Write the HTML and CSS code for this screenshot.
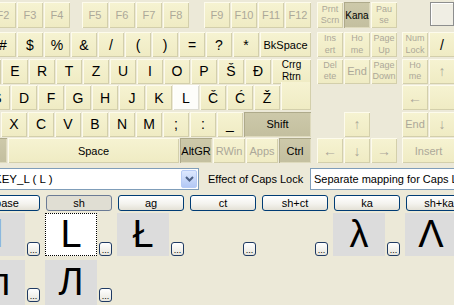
FILE: index.html
```html
<!DOCTYPE html>
<html lang="en">
<head>
    <meta charset="UTF-8">
    <title>Keyboard layout editor</title>
    <link rel="stylesheet" href="styles.css">
</head>
<body>
    <div class="keyboard">
        <div class="main">
            <div class="row frow off-f">
                <div class="key dim fn">F2</div>
                <div class="key dim fn">F3</div>
                <div class="key dim fn">F4</div>
                <div class="key dim fn gap11">F5</div>
                <div class="key dim fn">F6</div>
                <div class="key dim fn">F7</div>
                <div class="key dim fn">F8</div>
                <div class="key dim fn gap14">F9</div>
                <div class="key dim fn">F10</div>
                <div class="key dim fn">F11</div>
                <div class="key dim fn">F12</div>
            </div>
            <div class="rows">
                <div class="row off-2">
                    <div class="key">#</div>
                    <div class="key">$</div>
                    <div class="key">%</div>
                    <div class="key">&amp;</div>
                    <div class="key">/</div>
                    <div class="key">(</div>
                    <div class="key">)</div>
                    <div class="key">=</div>
                    <div class="key">?</div>
                    <div class="key">*</div>
                    <div class="key lbl w51">BkSpace</div>
                </div>
                <div class="row off-3">
                    <div class="key">W</div>
                    <div class="key">E</div>
                    <div class="key">R</div>
                    <div class="key">T</div>
                    <div class="key">Z</div>
                    <div class="key">U</div>
                    <div class="key">I</div>
                    <div class="key">O</div>
                    <div class="key">P</div>
                    <div class="key">Š</div>
                    <div class="key">Đ</div>
                    <div class="key enter-top w39">Crrg<br>Rtrn</div>
                </div>
                <div class="row off-4">
                    <div class="key">S</div>
                    <div class="key">D</div>
                    <div class="key">F</div>
                    <div class="key">G</div>
                    <div class="key">H</div>
                    <div class="key">J</div>
                    <div class="key">K</div>
                    <div class="key sel">L</div>
                    <div class="key">Č</div>
                    <div class="key">Ć</div>
                    <div class="key">Ž</div>
                    <div class="key enter-low w30"></div>
                </div>
                <div class="row off-5">
                    <div class="key">Y</div>
                    <div class="key">X</div>
                    <div class="key">C</div>
                    <div class="key">V</div>
                    <div class="key">B</div>
                    <div class="key">N</div>
                    <div class="key">M</div>
                    <div class="key">;</div>
                    <div class="key">:</div>
                    <div class="key">_</div>
                    <div class="key lbl down w67">Shift</div>
                </div>
                <div class="row off-6">
                    <div class="key down w27"></div>
                    <div class="key lbl w171">Space</div>
                    <div class="key lbl down w32">AltGR</div>
                    <div class="key lbl dim w32">RWin</div>
                    <div class="key lbl dim w32">Apps</div>
                    <div class="key lbl down w32">Ctrl</div>
                </div>
            </div>
        </div>

        <div class="nav">
            <div class="grid3 frow">
                <div class="key dim sm">Prnt<br>Scrn</div>
                <div class="key down kana">Kana</div>
                <div class="key dim sm">Pau<br>se</div>
            </div>
            <div class="grid3 pad">
                <div class="key dim sm">Ins<br>ert</div>
                <div class="key dim sm">Ho<br>me</div>
                <div class="key dim sm">Page<br>Up</div>
                <div class="key dim sm">Del<br>ete</div>
                <div class="key dim lbl">End</div>
                <div class="key dim sm">Page<br>Down</div>
                <div class="key dim arrow up">↑</div>
                <div class="key dim arrow left">←</div>
                <div class="key dim arrow down-arrow">↓</div>
                <div class="key dim arrow right">→</div>
            </div>
        </div>

        <div class="num">
            <div class="grid2 frow">
                <div class="led"></div>
            </div>
            <div class="grid2 pad">
                <div class="key dim sm">Num<br>Lock</div>
                <div class="key">/</div>
                <div class="key dim sm">Ho<br>me</div>
                <div class="key dim arrow">↑</div>
                <div class="key dim arrow">←</div>
                <div class="key"></div>
                <div class="key dim lbl">End</div>
                <div class="key dim arrow">↓</div>
                <div class="key dim lbl span2">Insert</div>
            </div>
        </div>
    </div>

    <div class="controls">
        <div class="combo">
            <span class="combo-text">KEY_L ( L )</span>
            <span class="combo-btn">
                <svg width="9" height="6" viewBox="0 0 9 6"><path d="M1 1 L4.5 4.5 L8 1" fill="none" stroke="#4d6185" stroke-width="2"/></svg>
            </span>
        </div>
        <span class="caps-label">Effect of Caps Lock</span>
        <div class="field">Separate mapping for Caps Lock</div>
    </div>

    <div class="tabs">
        <div class="tab">base</div>
        <div class="tab on">sh</div>
        <div class="tab">ag</div>
        <div class="tab">ct</div>
        <div class="tab">sh+ct</div>
        <div class="tab">ka</div>
        <div class="tab">sh+ka</div>
    </div>

    <div class="cells">
        <div class="slot"><div class="cell grey blue">l</div><div class="dots">...</div></div>
        <div class="slot"><div class="cell focus">L</div><div class="dots">...</div></div>
        <div class="slot"><div class="cell grey">Ł</div><div class="dots">...</div></div>
        <div class="slot"><div class="cell"></div><div class="dots">...</div></div>
        <div class="slot"><div class="cell"></div><div class="dots">...</div></div>
        <div class="slot"><div class="cell grey">λ</div><div class="dots">...</div></div>
        <div class="slot"><div class="cell grey">Λ</div><div class="dots">...</div></div>
    </div>
    <div class="cells second">
        <div class="slot"><div class="cell grey">л</div><div class="dots">...</div></div>
        <div class="slot"><div class="cell grey">Л</div><div class="dots">...</div></div>
    </div>
</body>
</html>
```

FILE: styles.css
```css
body {
    margin: 0;
    width: 454px;
    height: 305px;
    overflow: hidden;
    background: #ece9d8;
    font-family: "Liberation Sans", Arial, sans-serif;
    color: #000;
}
.keyboard {
    display: flex;
    align-items: flex-start;
    height: 163px;
}
.main {
    flex: none;
    width: 312px;
}
.nav {
    flex: none;
    width: 80px;
    margin-left: 5px;
}
.num {
    flex: none;
    width: 53px;
    margin-left: 5px;
}
.row {
    display: flex;
    gap: 1px;
    height: 25px;
}
.frow {
    height: 26px;
    margin-top: 2px;
}
.rows {
    display: flex;
    flex-direction: column;
    gap: 1.5px;
    margin-top: 4px;
}
.off-f, .off-2 { margin-left: -10px; }
.off-3 { margin-left: -25px; }
.off-4 { margin-left: -16px; }
.off-5 { margin-left: -26px; }
.off-6 { margin-left: -20px; }
.gap11 { margin-left: 11px; }
.gap14 { margin-left: 14px; }
.key {
    flex: none;
    width: 26px;
    box-sizing: border-box;
    display: flex;
    align-items: center;
    justify-content: center;
    text-align: center;
    white-space: nowrap;
    font-size: 14px;
    background: linear-gradient(#f6f3d2, #efebc3);
    box-shadow: inset 1px 1px 0 #fdfbec, inset -1px -1px 0 #d3cfab;
}
.w27 { width: 27px; }
.w30 { width: 30px; }
.w32 { width: 32px; }
.w39 { width: 39px; }
.w51 { width: 51px; }
.w67 { width: 67px; }
.w171 { width: 171px; }
.fn { font-size: 11px; }
.lbl { font-size: 11px; }
.sm {
    font-size: 9px;
    line-height: 11.5px;
}
.kana { font-size: 10px; }
.arrow { font-size: 14px; }
.dim { color: #aca899; }
.down {
    background: linear-gradient(#cdc9aa, #c3bf9f);
    box-shadow: inset 1px 1px 0 #aeaa8b, inset -1px -1px 0 #dedabd;
}
.sel {
    background: #fdfdfa;
    box-shadow: inset 1px 1px 0 #fff, inset -1px -1px 0 #dcdcd2;
}
.enter-top {
    font-size: 10px;
    line-height: 12.5px;
}
.enter-low {
    align-self: flex-start;
    height: 28px;
    margin-top: -3px;
    box-shadow: inset 1px 0 0 #fdfbec, inset -1px -1px 0 #d3cfab;
}
.grid3 {
    display: grid;
    grid-template-columns: repeat(3, 26px);
    column-gap: 1px;
}
.grid2 {
    display: grid;
    grid-template-columns: 26px 26px;
    column-gap: 1px;
}
.pad {
    grid-template-rows: repeat(5, 25px);
    row-gap: 1.5px;
    margin-top: 4px;
}
.nav .up { grid-area: 4 / 2; }
.nav .left { grid-area: 5 / 1; }
.nav .down-arrow { grid-area: 5 / 2; }
.nav .right { grid-area: 5 / 3; }
.span2 {
    grid-column: span 2;
    width: auto;
}
.led {
    grid-column: 2;
    width: 24px;
    height: 24px;
    margin-left: 1px;
    box-sizing: border-box;
    border: 1px solid #8d8e8e;
    background: #f0eee4;
    box-shadow: inset 1px 1px 0 #fff;
}
.controls {
    display: flex;
    align-items: center;
    height: 22px;
    margin-top: 5px;
    font-size: 11px;
}
.combo {
    flex: none;
    display: flex;
    align-items: center;
    width: 259px;
    height: 22px;
    margin-left: -60px;
    padding-left: 53px;
    box-sizing: border-box;
    border: 1px solid #7f9db9;
    background: #fff;
    font-size: 11.5px;
}
.combo-text {
    flex: 1;
    white-space: nowrap;
}
.combo-btn {
    display: flex;
    align-items: center;
    justify-content: center;
    width: 16px;
    height: 18px;
    margin-right: 1px;
    box-sizing: border-box;
    border: 1px solid #b7cbf5;
    border-radius: 2px;
    background: linear-gradient(#dde8fe, #b3c8f5);
}
.caps-label {
    flex: none;
    width: 102px;
    margin-left: 9px;
    white-space: nowrap;
}
.field {
    flex: none;
    width: 200px;
    height: 22px;
    padding-left: 3px;
    box-sizing: border-box;
    border: 1px solid #7f9db9;
    background: #fff;
    line-height: 20px;
    white-space: nowrap;
    overflow: hidden;
}
.tabs {
    display: flex;
    gap: 6px;
    height: 16px;
    margin: 5px 0 0 -26px;
}
.tab {
    flex: none;
    width: 66px;
    box-sizing: border-box;
    border: 1px solid #003c74;
    border-radius: 3px;
    background: linear-gradient(#ffffff, #f4f3ee 55%, #e4e1d6);
    font-size: 11px;
    line-height: 14px;
    text-align: center;
}
.tab.on {
    background: #e0ded3;
    border-color: #6b7b95;
}
.cells {
    display: flex;
    gap: 5px;
    height: 43px;
    margin: 2px 0 0 -27px;
}
.slot {
    flex: none;
    display: flex;
    align-items: flex-end;
    gap: 2px;
}
.cell {
    width: 52px;
    height: 43px;
    box-sizing: border-box;
    display: flex;
    align-items: center;
    justify-content: center;
    font-size: 38px;
}
.cell.grey { background: #dcdcdc; }
.cell.focus {
    background: #fff;
    border: 1px dotted #000;
}
.cell.blue { color: #86a9e2; }
.dots {
    width: 13px;
    height: 14px;
    box-sizing: border-box;
    border: 1px solid #1f3a63;
    border-radius: 3px;
    background: linear-gradient(#fff, #e8e6dd);
    font-size: 9px;
    line-height: 15px;
    text-align: center;
    overflow: hidden;
}
.second {
    height: 45px;
    margin-top: 4px;
}
.second .cell { height: 45px; }
.second .dots { margin-bottom: 3px; }
```
